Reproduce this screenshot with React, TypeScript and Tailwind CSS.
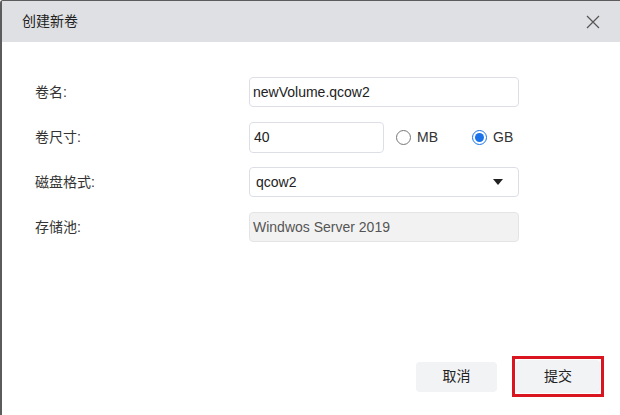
import React, { useState } from 'react';

const cjk = "font-['Liberation_Sans','Noto_Sans_CJK_SC',sans-serif]";

const Row: React.FC<{ label: string; children: React.ReactNode }> = ({ label, children }) => (
    <div className="flex items-center h-[30px]">
        <div className="w-[214px] text-[14px] text-[#333]">{label}</div>
        {children}
    </div>
);

const Radio: React.FC<{ checked: boolean; label: string; onClick: () => void }> = ({ checked, label, onClick }) => (
    <button onClick={onClick} className="flex items-center gap-[6px] text-[14px] text-[#333]">
        {checked ? (
            <span className="w-[15px] h-[15px] rounded-full border border-[#1a73e8] flex items-center justify-center">
                <span className="w-[9px] h-[9px] rounded-full bg-[#1a73e8]" />
            </span>
        ) : (
            <span className="w-[15px] h-[15px] rounded-full border border-[#777]" />
        )}
        {label}
    </button>
);

export default function App() {
    const [unit, setUnit] = useState<'MB' | 'GB'>('GB');

    return (
        <div className={`${cjk} w-[620px] h-[415px] flex flex-col bg-white border-l-2 border-t border-[#5c5c5c] rounded-tl-[3px] overflow-hidden`}>
            {/* Header */}
            <div className="h-[41px] shrink-0 bg-[#dfe0e3] flex items-center justify-between pl-[20px] pr-[20px]">
                <span className="text-[14px] text-[#222]">创建新卷</span>
                <svg width="14" height="14" viewBox="0 0 14 14" className="text-[#555]">
                    <path d="M1 1L13 13M13 1L1 13" stroke="currentColor" strokeWidth="1.2" fill="none" />
                </svg>
            </div>

            {/* Form */}
            <div className="flex-1 flex flex-col">
                <div className="flex flex-col gap-[15px] pt-[35px] pl-[33px]">
                    <Row label="卷名:">
                        <div className="w-[270px] h-[30px] border border-[#dcdfe6] rounded-[4px] px-[3px] flex items-center text-[14px] text-[#222]">
                            newVolume.qcow2
                        </div>
                    </Row>
                    <Row label="卷尺寸:">
                        <div className="w-[135px] h-[31px] border border-[#dcdfe6] rounded-[4px] px-[4px] flex items-center text-[14px] text-[#222]">
                            40
                        </div>
                        <div className="flex items-center gap-[34px] ml-[12px]">
                            <Radio checked={unit === 'MB'} label="MB" onClick={() => setUnit('MB')} />
                            <Radio checked={unit === 'GB'} label="GB" onClick={() => setUnit('GB')} />
                        </div>
                    </Row>
                    <Row label="磁盘格式:">
                        <div className="w-[270px] h-[30px] border border-[#dcdfe6] rounded-[4px] pl-[6px] pr-[15px] flex items-center justify-between text-[14px] text-[#222]">
                            <span>qcow2</span>
                            <svg width="10" height="6" viewBox="0 0 10 6">
                                <path d="M0 0H10L5 6Z" fill="#222" />
                            </svg>
                        </div>
                    </Row>
                    <Row label="存储池:">
                        <div className="w-[270px] h-[30px] border border-[#e4e4e4] bg-[#f2f2f2] rounded-[4px] px-[3px] flex items-center text-[14px] text-[#555]">
                            Windwos Server 2019
                        </div>
                    </Row>
                </div>

                {/* Footer */}
                <div className="mt-auto flex items-center justify-end gap-[15px] pr-[16px] pb-[18px]">
                    <button className="w-[81px] h-[30px] rounded-[4px] bg-[#f2f3f5] text-[14px] text-[#222]">取消</button>
                    <div className="border-[3px] border-[#d9161f] p-[1px]">
                        <button className="w-[84px] h-[33px] rounded-[4px] bg-[#f2f3f5] text-[14px] text-[#222]">提交</button>
                    </div>
                </div>
            </div>
        </div>
    );
}
